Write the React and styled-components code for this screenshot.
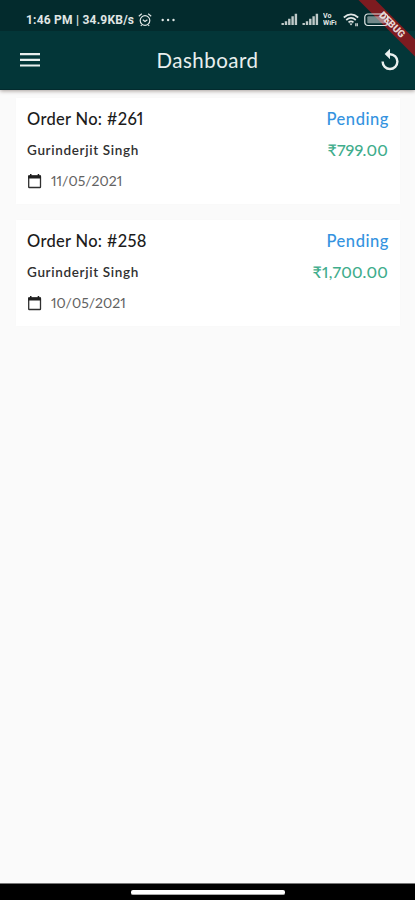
import React from "react";
import styled, { createGlobalStyle } from "styled-components";

const GlobalStyle = createGlobalStyle`
  * { box-sizing: border-box; }
  body { margin: 0; background: #fafafa; }
`;

const Screen = styled.div`
  position: relative;
  width: 415px;
  height: 900px;
  display: flex;
  flex-direction: column;
  overflow: hidden;
  background: #fafafa;
  font-family: Lato, "Open Sans", sans-serif;
  font-feature-settings: "pnum" 1;
`;

const Header = styled.header`
  flex: none;
  background: #033638;
  border-bottom: 1px solid #022b2e;
  box-shadow: 0 1px 4px rgba(40, 20, 10, 0.4);
`;

const StatusBar = styled.div`
  height: 31px;
  padding: 8px 21px 0 26px;
  display: flex;
  align-items: center;
  justify-content: space-between;
  background: #032b2d;
  color: #e0e6e5;
`;

const StatusGroup = styled.div`
  position: relative;
  z-index: 2;
  display: flex;
  align-items: center;
  gap: ${(p) => p.$gap}px;
`;

const Clock = styled.span`
  width: 109px;
  font: 700 12px/16px Roboto, sans-serif;
  letter-spacing: 0.22px;
  white-space: nowrap;
`;

const Toolbar = styled.div`
  height: 58px;
  padding: 0 14px 0 20px;
  display: grid;
  grid-template-columns: 22px 1fr 22px;
  align-items: center;
  color: #e9efee;
`;

const Title = styled.h1`
  margin: 0;
  padding-right: 6px;
  text-align: center;
  font-size: 20.5px;
  font-weight: 400;
  line-height: 26px;
  letter-spacing: 0.5px;
`;

const IconButton = styled.button`
  display: flex;
  padding: 0;
  border: 0;
  background: none;
  color: inherit;
`;

const Ribbon = styled.div`
  position: absolute;
  z-index: 1;
  top: 19px;
  left: 337px;
  width: 110px;
  height: 12px;
  transform: rotate(45deg);
  background: #7d1b20;
  color: #e8d4d2;
  text-align: center;
  font: 900 10px/12px Roboto, sans-serif;
`;

const OrderList = styled.main`
  flex: 1;
  padding: 8px 15px 0 16px;
  display: flex;
  flex-direction: column;
  gap: 16px;
`;

const Card = styled.article`
  height: 106px;
  padding: 10px 11px 0 11px;
  background: #fff;
  box-shadow: 0 0 2px rgba(0, 0, 0, 0.015);
`;

const Row = styled.div`
  height: 31px;
  display: flex;
  justify-content: space-between;
  align-items: flex-start;
  line-height: 22px;
  white-space: nowrap;
`;

const OrderNumber = styled.span`
  color: #1c1c1c;
  font-size: 16.5px;
  font-weight: 500;
  letter-spacing: 0.3px;
`;

const Status = styled.span`
  color: #3493df;
  font-size: 16.5px;
  font-weight: 500;
  letter-spacing: 0.55px;
`;

const Customer = styled.span`
  color: #303030;
  font-size: 13.5px;
  font-weight: 600;
  letter-spacing: 0.66px;
`;

const Amount = styled.span`
  padding-right: 1px;
  color: #3fad8c;
  font-size: 16px;
  font-weight: 500;
  line-height: 21px;
  letter-spacing: 0.2px;
`;

const DateLabel = styled.span`
  display: flex;
  align-items: center;
  gap: 9px;
  color: #626262;
  font-size: 14px;
`;

const NavBar = styled.footer`
  flex: none;
  height: 17px;
  border-top: 1px solid #777;
  display: flex;
  justify-content: center;
  padding-top: 6px;
  background: #000;
`;

const HomeHandle = styled.div`
  width: 154px;
  height: 5px;
  border-radius: 2px;
  background: #fff;
  border-bottom: 1px solid #aaa;
`;

const AlarmIcon = () => (
  <svg width="14" height="14" viewBox="0 0 14 14" fill="none" stroke="currentColor" strokeWidth="1.2">
    <circle cx="7" cy="7.5" r="4.8" />
    <path d="M.8 3.2 3.8.8M13.2 3.2 10.2.8M2.8 12.8l1-1M11.2 12.8l-1-1M4.8 6.8 7 8.4l2.4-1.6" />
  </svg>
);

const DotsIcon = () => (
  <svg width="21" height="4" fill="currentColor">
    <circle cx="7.7" cy="2" r="1.2" />
    <circle cx="13.1" cy="2" r="1.2" />
    <circle cx="18.5" cy="2" r="1.2" />
  </svg>
);

const SignalIcon = () => (
  <svg width="17" height="13" fill="currentColor" opacity=".85">
    <path d="M.5 10h2.4v2H.5zM3.8 8.2h2.4V12H3.8zM7.1 5.8h2.4V12H7.1zM10.4 3.3h2.4V12h-2.4zM13.7.7h2.4V12h-2.4z" />
  </svg>
);

const VoWifi = styled.span`
  width: 16px;
  display: flex;
  flex-direction: column;
  font: 700 7px/7px Roboto, sans-serif;
`;

const VoWifiLine = styled.span`
  height: 7px;
  overflow: hidden;
`;

const WifiIcon = () => (
  <svg width="17" height="14" viewBox="0 0 17 14" fill="none" stroke="currentColor" strokeWidth="1.7">
    <path d="M.8 4.5Q8 -1.8 15.2 4.5M3.2 7Q8 2.6 12.8 7M5.5 9.4Q8 7.3 10.5 9.4" />
    <path d="m6.4 10.5 1.6 2 1.6-2z" fill="currentColor" stroke="none" />
    <path d="M12.8 10.2v3M14.3 10.2v3" strokeWidth="1.1" />
  </svg>
);

const BatteryIcon = () => (
  <svg width="30" height="14" viewBox="0 0 30 14" fill="none" stroke="currentColor" strokeWidth="1.2">
    <rect x=".8" y="1" width="23" height="11.5" rx="3" />
    <rect x="3.3" y="3.2" width="18" height="7" rx="1" fill="currentColor" opacity=".5" stroke="none" />
  </svg>
);

const MenuIcon = () => (
  <svg width="20" height="14" fill="currentColor">
    <path d="M0 0h20v2.2H0zM0 5.7h20v2.2H0zM0 11.4h20v2.2H0z" />
  </svg>
);

const ReplayIcon = () => (
  <svg width="22" height="24" viewBox="0 0 22 24">
    <path d="M11 6.2A7.4 7.4 0 1 1 3.6 13.6" fill="none" stroke="currentColor" strokeWidth="2.4" />
    <path d="M11 .8v10.4L5.7 6z" fill="currentColor" />
  </svg>
);

const CalendarIcon = () => (
  <svg width="15" height="16" viewBox="0 0 15 16">
    <rect x="1.7" y="3" width="11.8" height="11.5" rx=".6" fill="none" stroke="#303030" strokeWidth="1.3" />
    <path d="M1.2 2.5H14v3H1.2zM3 .9h1.5v2H3zM10.7.9h1.5v2h-1.5z" fill="#202020" />
  </svg>
);

const orders = [
  { id: "261", name: "Gurinderjit Singh", date: "11/05/2021", amount: "₹799.00" },
  { id: "258", name: "Gurinderjit Singh", date: "10/05/2021", amount: "₹1,700.00" },
];

const OrderCard = ({ order }) => (
  <Card>
    <Row>
      <OrderNumber>Order No: #{order.id}</OrderNumber>
      <Status>Pending</Status>
    </Row>
    <Row>
      <Customer>{order.name}</Customer>
      <Amount>{order.amount}</Amount>
    </Row>
    <Row>
      <DateLabel><CalendarIcon />{order.date}</DateLabel>
    </Row>
  </Card>
);

export default function App() {
  return (
    <Screen>
      <GlobalStyle />
      <Header>
        <StatusBar>
          <StatusGroup $gap={3}>
            <Clock>1:46 PM | 34.9KB/s</Clock>
            <AlarmIcon />
            <DotsIcon />
          </StatusGroup>
          <StatusGroup $gap={4}>
            <SignalIcon />
            <SignalIcon />
            <VoWifi><VoWifiLine>Vo</VoWifiLine><VoWifiLine>WiFi</VoWifiLine></VoWifi>
            <WifiIcon />
            <BatteryIcon />
          </StatusGroup>
        </StatusBar>
        <Toolbar>
          <IconButton aria-label="Menu"><MenuIcon /></IconButton>
          <Title>Dashboard</Title>
          <IconButton aria-label="Refresh"><ReplayIcon /></IconButton>
        </Toolbar>
      </Header>
      <OrderList>
        {orders.map((order) => <OrderCard key={order.id} order={order} />)}
      </OrderList>
      <NavBar><HomeHandle /></NavBar>
      <Ribbon>DEBUG</Ribbon>
    </Screen>
  );
}
